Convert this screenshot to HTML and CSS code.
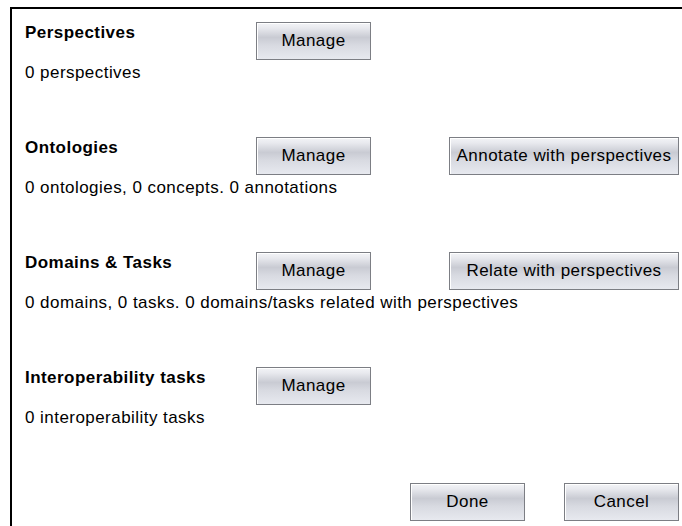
FILE: index.html
```html
<!DOCTYPE html>
<html lang="en">
<head>
  <meta charset="UTF-8" />
  <title>Perspectives</title>
  <link rel="stylesheet" href="styles.css">
</head>
<body>
  <div class="panel">
    <div class="section">
      <div class="row">
        <div class="title">Perspectives</div>
        <button class="btn">Manage</button>
      </div>
      <div class="desc">0 perspectives</div>
    </div>

    <div class="section">
      <div class="row">
        <div class="title">Ontologies</div>
        <button class="btn">Manage</button>
        <button class="btn wide">Annotate with perspectives</button>
      </div>
      <div class="desc">0 ontologies, 0 concepts. 0 annotations</div>
    </div>

    <div class="section">
      <div class="row">
        <div class="title">Domains &amp; Tasks</div>
        <button class="btn">Manage</button>
        <button class="btn wide">Relate with perspectives</button>
      </div>
      <div class="desc">0 domains, 0 tasks. 0 domains/tasks related with perspectives</div>
    </div>

    <div class="section">
      <div class="row">
        <div class="title">Interoperability tasks</div>
        <button class="btn">Manage</button>
      </div>
      <div class="desc">0 interoperability tasks</div>
    </div>

    <div class="actions">
      <button class="btn">Done</button>
      <button class="btn">Cancel</button>
    </div>
  </div>
</body>
</html>
```

FILE: styles.css
```css
html, body {
  margin: 0;
  height: 100%;
  overflow: hidden;
  background-color: #ffffff;
}

body {
  font-family: "Liberation Sans", Arial, sans-serif;
  font-size: 17px;
  letter-spacing: 0.45px;
  line-height: 20px;
  color: #000;
}

.panel {
  box-sizing: border-box;
  height: calc(100% - 7px);
  margin: 7px 0 0 10px;
  border-top: 2px solid #000;
  border-left: 2px solid #000;
  padding: 13px 3px 0 13px;
}

.section {
  height: 115px;
}

.row {
  display: flex;
  align-items: flex-start;
}

.title {
  width: 231px;
  padding-top: 1px;
  font-weight: bold;
}

.desc {
  margin-top: 3px;
}

.btn {
  box-sizing: border-box;
  width: 115px;
  height: 38px;
  padding: 0;
  font-family: inherit;
  font-size: 17px;
  letter-spacing: 0.45px;
  color: #000;
  border: 1px solid #7c7e84;
  box-shadow: inset 1px 1px 0 #ffffff;
  background: linear-gradient(to bottom, #f3f4f7 0%, #e8e9ee 14%, #c9cbd3 40%, #d8dae1 62%, #e7e9ef 100%);
}

.btn.wide {
  width: 230px;
  margin-left: auto;
}

.actions {
  display: flex;
  justify-content: flex-end;
  gap: 39px;
  margin-top: 1px;
}
```
